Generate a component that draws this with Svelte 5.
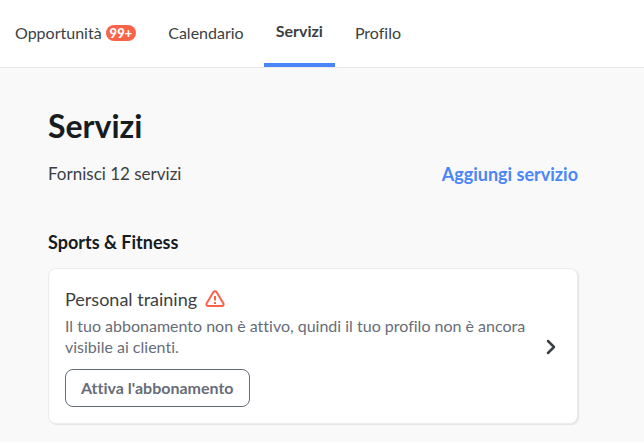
<script lang="ts">
  interface Tab {
    label: string
    href: string
    badge?: string
    active?: boolean
  }

  interface Service {
    name: string
    message: string
    action: string
  }

  const tabs: Tab[] = [
    { label: 'Opportunità', href: '#opportunita', badge: '99+' },
    { label: 'Calendario', href: '#calendario' },
    { label: 'Servizi', href: '#servizi', active: true },
    { label: 'Profilo', href: '#profilo' }
  ]

  const services: Service[] = [
    {
      name: 'Personal training',
      message: 'Il tuo abbonamento non è attivo, quindi il tuo profilo non è ancora visibile ai clienti.',
      action: "Attiva l'abbonamento"
    }
  ]
</script>

<nav class="nav">
  {#each tabs as tab}
    <a class="tab" class:tab--active={tab.active} href={tab.href} aria-current={tab.active ? 'page' : undefined}>
      <span>{tab.label}</span>
      {#if tab.badge}
        <span class="badge">{tab.badge}</span>
      {/if}
    </a>
  {/each}
</nav>

<main class="page">
  <h1 class="page__title">Servizi</h1>
  <div class="summary">
    <p class="summary__count">Fornisci 12 servizi</p>
    <a class="summary__link" href="#aggiungi">Aggiungi servizio</a>
  </div>

  <section>
    <h2 class="category">Sports &amp; Fitness</h2>
    {#each services as service}
      <article class="card">
        <div class="card__body">
          <h3 class="card__name">
            {service.name}
            <svg class="card__warning" viewBox="0 0 20 18" aria-hidden="true">
              <path d="M8.3 2.2 1.7 13.3c-.8 1.4.1 2.7 1.6 2.7h13.400c1.500 0 2.400-1.300 1.600-2.700L11.700 2.200c-.8-1.300-2.600-1.300-3.400 0Z" />
              <path d="M10 6v4.500M10 12v2" />
            </svg>
          </h3>
          <p class="card__message">{service.message}</p>
          <button class="card__action" type="button">{service.action}</button>
        </div>
        <a class="card__open" href="#personal-training" aria-label="Apri {service.name}">
          <svg viewBox="0 0 10 16" aria-hidden="true">
            <path d="M2 2l6 6-6 6" />
          </svg>
        </a>
      </article>
    {/each}
  </section>
</main>

<style>
  :global(body) {
    background: #f9f9f9;
    color: #3b3f43;
    font-family: Lato, 'Liberation Sans', sans-serif;
    font-size: 16px;
    font-variant-ligatures: none;
  }

  .nav {
    display: flex;
    gap: 8px;
    height: 67px;
    padding-left: 3px;
    background: #fff;
    border-bottom: 1px solid #e9eaeb;
  }

  .tab {
    display: flex;
    align-items: center;
    gap: 4px;
    padding: 2px 12px 4px;
    box-sizing: border-box;
    color: #3b3f43;
    font-size: 16px;
    text-decoration: none;
  }

  .tab--active {
    border-bottom: 4px solid #4a86f7;
    font-weight: 700;
  }

  .badge {
    padding: 0 4px;
    border-radius: 8px;
    background: #f96449;
    color: #fff;
    font-size: 13px;
    font-weight: 900;
    line-height: 16px;
  }

  .page {
    padding: 40px 66px 18px 48px;
  }

  .page__title {
    margin: 0;
    color: #161c20;
    font-size: 32px;
    font-weight: 700;
    line-height: 36px;
  }

  .summary {
    display: flex;
    align-items: center;
    justify-content: space-between;
    margin: 18px 0 44px;
    line-height: 24px;
  }

  .summary__count {
    margin: 0;
    font-size: 17px;
  }

  .summary__link {
    color: #4a86f7;
    font-size: 18px;
    font-weight: 700;
    text-decoration: none;
  }

  .category {
    margin: 0 0 14px;
    color: #161c20;
    font-size: 18px;
    font-weight: 700;
    line-height: 24px;
  }

  .card {
    display: flex;
    align-items: center;
    gap: 16px;
    padding: 18px 21px 16px 16px;
    background: #fff;
    border: 1px solid #ececec;
    border-radius: 8px;
    box-shadow: 1px 1px 1px #e4e4e4;
  }

  .card__body {
    flex: 1;
  }

  .card__name {
    display: flex;
    align-items: center;
    gap: 8px;
    margin: 0 0 4px;
    font-size: 18px;
    font-weight: 400;
    line-height: 24px;
  }

  .card__warning {
    width: 20px;
    height: 18px;
    fill: none;
    stroke: #f96449;
    stroke-width: 2;
  }

  .card__message {
    margin: 0 0 12px;
    color: #676d78;
    font-size: 16px;
    line-height: 21px;
  }

  .card__action {
    height: 38px;
    padding: 0 15px 2px;
    background: #fff;
    border: 1px solid #676d78;
    border-radius: 8px;
    color: #676d78;
    font-family: inherit;
    font-size: 16px;
    font-variant-ligatures: inherit;
    font-weight: 700;
  }

  .card__open svg {
    display: block;
    width: 10px;
    height: 16px;
    fill: none;
    stroke: #3b3f46;
    stroke-width: 2.5;
    stroke-linecap: round;
    stroke-linejoin: round;
  }
</style>
